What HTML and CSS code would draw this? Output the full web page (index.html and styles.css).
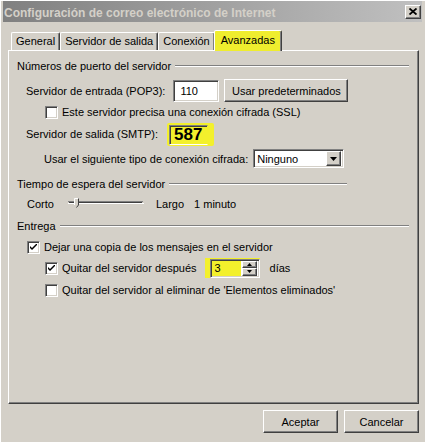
FILE: index.html
```html
<!DOCTYPE html>
<html lang="es">
<head>
    <meta charset="UTF-8">
    <meta name="viewport" content="width=device-width, initial-scale=1.0">
    <title>Configuración de correo electrónico de Internet</title>
    <link rel="stylesheet" href="styles.css">
</head>
<body>
    <div class="window">
        <!-- Title bar -->
        <div class="titlebar">
            <span class="title">Configuración de correo electrónico de Internet</span>
            <span class="close">
                <svg width="8" height="7" viewBox="0 0 8 7"><path d="M0.5 0.5L7.5 6.5M7.5 0.5L0.5 6.5" stroke="#000" stroke-width="1.8"/></svg>
            </span>
        </div>

        <!-- Tabs -->
        <div class="tabs">
            <span class="tab">General</span>
            <span class="tab">Servidor de salida</span>
            <span class="tab">Conexión</span>
            <span class="tab active">Avanzadas</span>
        </div>

        <div class="panel">
            <div class="group">Números de puerto del servidor</div>

            <div class="row pop3">
                <span>Servidor de entrada (POP3):</span>
                <span class="field port">110</span>
                <span class="btn defaults">Usar predeterminados</span>
            </div>

            <div class="row ssl">
                <span class="check"></span>
                <span>Este servidor precisa una conexión cifrada (SSL)</span>
            </div>

            <div class="row smtp">
                <span>Servidor de salida (SMTP):</span>
                <span class="marker smtp-mark"><span class="field smtp-port">587</span></span>
            </div>

            <div class="row cipher">
                <span>Usar el siguiente tipo de conexión cifrada:</span>
                <span class="field select">
                    Ninguno
                    <span class="btn drop">
                        <svg width="7" height="4" viewBox="0 0 7 4"><path d="M0 0H7L3.5 4Z" fill="#000"/></svg>
                    </span>
                </span>
            </div>

            <div class="group timeout">Tiempo de espera del servidor</div>

            <div class="row slider-row">
                <span>Corto</span>
                <svg class="slider" width="76" height="12" viewBox="0 0 76 12">
                    <path d="M0 3.5H75" stroke="#808080"/>
                    <path d="M1 4.5H74" stroke="#404040"/>
                    <path d="M0 5.5H76" stroke="#fff"/>
                    <path d="M6 0H11V7L8.5 10L6 7Z" fill="#d4d0c8"/>
                    <path d="M6.5 7V0.5H10.5" stroke="#fff" fill="none"/>
                    <path d="M10.5 0.5V7L8.5 9.5" stroke="#404040" fill="none"/>
                </svg>
                <span class="largo">Largo</span>
                <span class="minute">1 minuto</span>
            </div>

            <div class="group delivery">Entrega</div>

            <div class="row keep">
                <span class="check on">
                    <svg width="7" height="7" viewBox="0 0 7 7"><path d="M0 2L0 4L2 6L7 1L7 -1L2 4Z" fill="#000"/></svg>
                </span>
                <span>Dejar una copia de los mensajes en el servidor</span>
            </div>

            <div class="row remove-after">
                <span class="check on">
                    <svg width="7" height="7" viewBox="0 0 7 7"><path d="M0 2L0 4L2 6L7 1L7 -1L2 4Z" fill="#000"/></svg>
                </span>
                <span>Quitar del servidor después</span>
                <span class="marker spin-mark">
                    <span class="field spin">
                        3
                        <span class="spin-btns">
                            <span class="btn half"><svg width="5" height="3" viewBox="0 0 5 3"><path d="M2.5 0L5 3H0Z" fill="#000"/></svg></span>
                            <span class="btn half"><svg width="5" height="3" viewBox="0 0 5 3"><path d="M0 0H5L2.5 3Z" fill="#000"/></svg></span>
                        </span>
                    </span>
                </span>
                <span class="days">días</span>
            </div>

            <div class="row remove-deleted">
                <span class="check"></span>
                <span>Quitar del servidor al eliminar de 'Elementos eliminados'</span>
            </div>
        </div>

        <div class="actions">
            <span class="btn action">Aceptar</span>
            <span class="btn action">Cancelar</span>
        </div>
    </div>
</body>
</html>
```

FILE: styles.css
```css
* {
    box-sizing: border-box;
}

body {
    margin: 0;
    background-color: #d4d0c8;
    font-family: "Liberation Sans", Arial, sans-serif;
    font-size: 11px;
    color: black;
}

/* Window frame */
.window {
    width: 425px;
    height: 442px;
    padding: 1px 3px 0;
    box-shadow: inset 1px 1px #fff;
    overflow: hidden;
}

.titlebar {
    height: 21px;
    display: flex;
    align-items: center;
    justify-content: space-between;
    padding: 0 1px 0 1px;
    background: linear-gradient(to right, #808080, #c0c0c0);
}

.title {
    font-size: 12px;
    font-weight: bold;
    color: #d4d0c8;
    padding-top: 2px;
}

.close {
    width: 16px;
    height: 14px;
    display: flex;
    align-items: center;
    justify-content: center;
    background-color: #d4d0c8;
    border: 1px solid;
    border-color: #fff #404040 #404040 #fff;
    box-shadow: inset -1px -1px #808080;
}

/* Tabs */
.tabs {
    display: flex;
    align-items: flex-end;
    height: 20px;
    margin-top: 8px;
    padding-left: 8px;
    position: relative;
    z-index: 1;
}

.tab {
    height: 18px;
    padding: 0 4px;
    line-height: 17px;
    border: 1px solid;
    border-bottom: none;
    border-color: #fff #404040 transparent #fff;
    border-radius: 2px 2px 0 0;
    box-shadow: inset -1px 0 #808080;
}

.tab.active {
    height: 21px;
    margin: 0 -2px -1px -1px;
    padding: 0 6px;
    line-height: 18px;
    background-color: #efed2e;
}

/* Page */
.panel {
    width: 411px;
    height: 354px;
    margin-left: 5px;
    padding: 8px 9px 0 8px;
    border: 1px solid;
    border-color: #fff #404040 #404040 #fff;
    box-shadow: inset -1px -1px #808080;
}

.group {
    display: flex;
    align-items: center;
    height: 14px;
}

.group::after {
    content: "";
    flex: 1;
    margin-left: 4px;
    border-top: 1px solid #808080;
    border-bottom: 1px solid #fff;
}

.group.timeout {
    margin-top: 9px;
    margin-right: 62px;
}

.group.delivery {
    margin-top: 8px;
}

.row {
    display: flex;
    align-items: center;
    white-space: nowrap;
}

.field {
    background-color: #fff;
    border: 1px solid;
    border-color: #808080 #fff #fff #808080;
    box-shadow: inset 1px 1px #404040, inset -1px -1px #d4d0c8;
}

.btn {
    display: flex;
    align-items: center;
    justify-content: center;
    background-color: #d4d0c8;
    border: 1px solid;
    border-color: #fff #404040 #404040 #fff;
    box-shadow: inset -1px -1px #808080;
}

.check {
    flex: none;
    width: 13px;
    height: 13px;
    margin-right: 4px;
    display: flex;
    align-items: center;
    justify-content: center;
    background-color: #fff;
    border: 1px solid;
    border-color: #808080 #fff #fff #808080;
    box-shadow: inset 1px 1px #404040, inset -1px -1px #d4d0c8;
}

.marker {
    background-color: #f3f02c;
    display: flex;
    align-items: center;
}

/* Server ports */
.pop3 {
    height: 23px;
    margin-top: 6px;
    padding-left: 9px;
}

.port {
    width: 46px;
    height: 22px;
    margin-left: 8px;
    padding: 4px 0 0 6px;
}

.defaults {
    width: 124px;
    height: 23px;
    margin-left: 5px;
}

.ssl {
    height: 14px;
    margin-top: 3px;
    padding-left: 28px;
}

.smtp {
    height: 22px;
    margin-top: 4px;
    padding-left: 9px;
}

.smtp-mark {
    height: 23px;
    margin-left: 9px;
    padding: 2px 6px 1px 2px;
    border-radius: 2px;
}

.smtp-port {
    width: 39px;
    height: 20px;
    padding-left: 4px;
    background-color: transparent;
    border-right-color: transparent;
    box-shadow: inset 1px 1px #404040;
    font-size: 17px;
    font-weight: bold;
    line-height: 18px;
}

.cipher {
    height: 19px;
    margin-top: 4px;
    padding-left: 27px;
}

.select {
    width: 91px;
    height: 19px;
    margin-left: 5px;
    padding: 0 2px 0 3px;
    display: flex;
    align-items: center;
    justify-content: space-between;
}

.drop {
    width: 15px;
    height: 15px;
}

/* Timeout slider */
.slider-row {
    height: 14px;
    margin-top: 6px;
    padding-left: 10px;
}

.slider {
    margin-left: 14px;
}

.largo {
    margin-left: 12px;
}

.minute {
    margin-left: 10px;
}

/* Delivery */
.keep {
    height: 14px;
    margin-top: 7px;
    padding-left: 10px;
}

.remove-after {
    height: 20px;
    margin-top: 4px;
    padding-left: 28px;
}

.spin-mark {
    height: 20px;
    margin-left: 8px;
    padding-left: 5px;
}

.spin {
    width: 50px;
    height: 19px;
    padding: 0 2px 0 4px;
    display: flex;
    align-items: center;
    justify-content: space-between;
    background: linear-gradient(to right, #f3f02c 30px, #fff 30px);
}

.spin-btns {
    display: flex;
    flex-direction: column;
    width: 15px;
    height: 15px;
}

.half {
    height: 50%;
}

.days {
    margin-left: 10px;
}

.remove-deleted {
    height: 14px;
    margin-top: 5px;
    padding-left: 28px;
}

/* Dialog buttons */
.actions {
    display: flex;
    justify-content: flex-end;
    gap: 6px;
    margin-top: 6px;
    padding-right: 3px;
}

.action {
    width: 75px;
    height: 23px;
}
```
